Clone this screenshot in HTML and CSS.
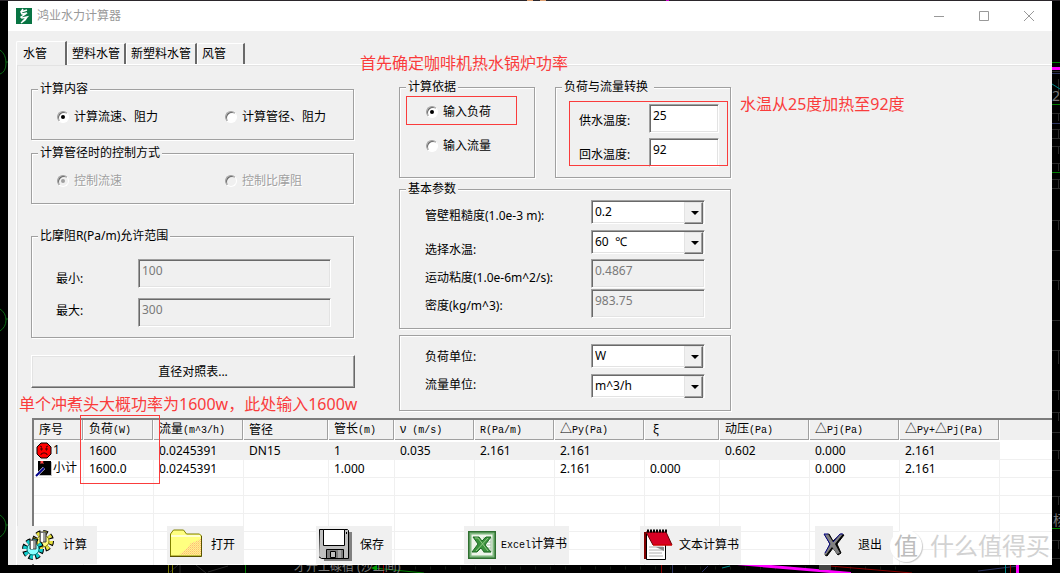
FILE: index.html
```html
<!DOCTYPE html>
<html lang="zh-CN">
<head>
<meta charset="utf-8">
<title>鸿业水力计算器</title>
<link rel="stylesheet" href="styles.css">
</head>
<body>
<svg class="backdrop" viewBox="0 0 1060 573" preserveAspectRatio="none" aria-hidden="true">
  <rect width="1060" height="573" fill="#000"/>
  <rect width="1060" height="1" fill="#2b262b"/>
  <g fill="#e0a070"><rect x="527" width="6" height="1"/><rect x="540" width="6" height="1"/></g>
  <rect x="666" width="3" height="1" fill="#c0c"/>
  <g fill="none" stroke="#084" stroke-width="1">
    <path stroke="#0a6a14" d="M0 50q6 4 6 13t-6 11M6 62h2M0 309q6 4 6 11t-6 11M6 319h2M0 515q6 4 6 11t-6 11M6 525h2"/>
    <path stroke="#008000" d="M1052 62.500h8M1052 104.500h8M1052 172.500h8M1052 528.500h8M245.500 565v8M374 568l50 5"/>
    <path stroke="#151c15" stroke-width="3" stroke-dasharray="1 14" d="M400 568h500"/>
    <path stroke="#2b2b2b" d="M1052 71.500h8M1058.500 79v17M1052 113.500h8M1058.500 113v8M1052 129.500h8M1058.500 129v9M1052 138.500h8M1052 146.500h8M1058.500 146v8M1052 163.500h8M1058.500 163v8M1052 179.500h8M1058.500 179v9M1052 188.500h8M1052 220.500h8M1058.500 220v10M1052 250.500h8M1052 280.500h8M1058.500 280v10M1052 320.500h8M1052 350.500h8M1058.500 350v14M1052 390.500h8M1058.500 390v10M1052 412.500h8M1058.500 412v9M1052 432.500h8M1052 450.500h8M1058.500 450v9M1052 470.500h8M1052 496.500h8M1058.500 496v9M1052 540.500h8M1058.500 540v9M1052 558.500h8M170 572l8-7M180 565v8M196 565l10 8M208 572l20-6"/>
    <path stroke="#2d3560" d="M1052 73.500h8M1052 123.500h8M978 571l40-5M672.500 565v8M702 572l6-6"/>
    <path stroke="#088" d="M1052 84l8 5M1005.500 565v8M722 568l8-2"/>
    <path stroke="#8a0000" d="M830 566l82 7M661.500 565v8M383.500 565v8M1010.500 565v8"/>
    <path stroke="#770" d="M168.500 565v8M172.500 565v8"/>
  </g>
  <rect x="1052" y="67" width="8" height="3" fill="#f0f"/>
  <path d="M737 565h34l80 7v1h-20z" fill="#f0f"/>
  <rect x="819" y="565" width="12" height="5" fill="#444"/>
  <rect x="1016" y="565" width="3" height="8" fill="#f0f"/>
  <path d="M371 568l6-3v6z" fill="#090"/>
  <g class="cad-text"><text x="1052" y="101">28</text><text x="1053" y="525">杨</text><text x="294" y="571" font-size="12">才开工碌宿 (沙工间)</text></g>
</svg>

<main class="window">
  <header class="titlebar">
    <svg class="app-icon" width="16" height="16" viewBox="0 0 16 16" aria-hidden="true"><rect width="16" height="16" fill="#087443"/><path d="M11 2L5 4l1 2 5-1-6 4 1 1 5-1-5 5M7 1L5 4M11 5l-6 4M11 9l-2 3-4 3" fill="none" stroke="#fff" stroke-width="1.500"/></svg>
    <h1 class="title">鸿业水力计算器</h1>
    <div class="caption-buttons">
      <button type="button" aria-label="最小化"><svg width="12" height="12" viewBox="0 0 12 12"><path d="M1 6.500h10"/></svg></button>
      <button type="button" aria-label="最大化"><svg width="12" height="12" viewBox="0 0 12 12"><path d="M1.500 1.500h9v9h-9z"/></svg></button>
      <button type="button" aria-label="关闭"><svg width="12" height="12" viewBox="0 0 12 12"><path d="M1 1l10 10M11 1L1 11"/></svg></button>
    </div>
  </header>

  <nav class="tabs" role="tablist">
    <button type="button" class="tab selected" role="tab" aria-selected="true">水管</button>
    <button type="button" class="tab" role="tab">塑料水管</button>
    <button type="button" class="tab" role="tab">新塑料水管</button>
    <button type="button" class="tab" role="tab">风管</button>
  </nav>

  <section class="pane">
    <form class="form">
      <div class="left-column">
        <fieldset class="group radios-row">
          <legend>计算内容</legend>
          <label><input type="radio" name="content" checked>计算流速、阻力</label>
          <label><input type="radio" name="content">计算管径、阻力</label>
        </fieldset>
        <fieldset class="group radios-row" disabled>
          <legend>计算管径时的控制方式</legend>
          <label><input type="radio" name="control" checked>控制流速</label>
          <label><input type="radio" name="control">控制比摩阻</label>
        </fieldset>
        <fieldset class="group range">
          <legend>比摩阻R(Pa/m)允许范围</legend>
          <div class="labels"><label for="rmin">最小:</label><label for="rmax">最大:</label></div>
          <div class="controls"><input id="rmin" type="text" value="100" disabled><input id="rmax" type="text" value="300" disabled></div>
        </fieldset>
        <button type="button" class="push">直径对照表...</button>
      </div>

      <div class="right-column">
        <div class="top-groups">
          <fieldset class="group basis">
            <legend>计算依据</legend>
            <label><input type="radio" name="basis" checked>输入负荷</label>
            <label><input type="radio" name="basis">输入流量</label>
          </fieldset>
          <fieldset class="group convert">
            <legend class="wide-legend">负荷与流量转换</legend>
            <div class="labels"><label for="supply">供水温度:</label><label for="return">回水温度:</label></div>
            <div class="controls"><input id="supply" type="text" value="25"><input id="return" type="text" value="92"></div>
          </fieldset>
        </div>
        <fieldset class="group params">
          <legend>基本参数</legend>
          <div class="labels"><label for="rough">管壁粗糙度(1.0e-3 m):</label><label for="temp">选择水温:</label><label for="visc">运动粘度(1.0e-6m^2/s):</label><label for="dens">密度(kg/m^3):</label></div>
          <div class="controls">
            <span class="combo"><select id="rough"><option>0.2</option></select></span>
            <span class="combo"><select id="temp"><option>60 &nbsp;℃</option></select></span>
            <input id="visc" type="text" value="0.4867" disabled>
            <input id="dens" type="text" value="983.75" disabled>
          </div>
        </fieldset>
        <fieldset class="group units">
          <div class="labels"><label for="loadunit">负荷单位:</label><label for="flowunit">流量单位:</label></div>
          <div class="controls">
            <span class="combo"><select id="loadunit"><option>W</option></select></span>
            <span class="combo"><select id="flowunit"><option>m^3/h</option></select></span>
          </div>
        </fieldset>
      </div>
    </form>

    <div class="results">
      <div class="list">
        <table>
          <colgroup><col class="w50"><col class="w70"><col class="w90"><col class="w85"><col class="w66"><col class="w80"><col class="w80"><col class="w90"><col class="w75"><col class="w90"><col class="w90"><col class="w100"><col></colgroup>
          <thead>
            <tr><th>序号</th><th>负荷<span class="mono">(W)</span></th><th>流量<span class="mono">(m^3/h)</span></th><th>管径</th><th>管长<span class="mono">(m)</span></th><th>ν<span class="mono"> (m/s)</span></th><th><span class="mono">R(Pa/m)</span></th><th>△<span class="mono">Py(Pa)</span></th><th>&nbsp;ξ</th><th>动压<span class="mono">(Pa)</span></th><th>△<span class="mono">Pj(Pa)</span></th><th>△<span class="mono">Py+</span>△<span class="mono">Pj(Pa)</span></th><th class="filler"></th></tr>
          </thead>
          <tbody>
            <tr class="active">
              <td class="index"><svg width="18" height="17" viewBox="0 0 18 17" aria-hidden="true"><path d="M6 1h6l4 4v7l-4 4H6l-4-4V5z" fill="#f00" stroke="#000"/><path d="M5 4l2 1M13 4l-2 1M6 6h1v2H6zM11 6h1v2h-1zM6 13v-1l2-1h2l2 1v1" fill="none" stroke="#400"/></svg>1</td>
              <td>1600</td><td>0.0245391</td><td>DN15</td><td>1</td><td>0.035</td><td>2.161</td><td>2.161</td><td></td><td>0.602</td><td>0.000</td><td>2.161</td><td class="filler"></td>
            </tr>
            <tr>
              <td class="index"><svg width="18" height="17" viewBox="0 0 18 17" aria-hidden="true"><rect x="3" y="2" width="14" height="14" fill="#c0c0c0"/><rect x="3" y="1" width="13" height="14" fill="#000"/><path d="M6 1v3M6 1.500h2v1H6M8 4V3" stroke="#f44" fill="none"/><path d="M9 8l-5 5-2 3" stroke="#fff" stroke-width="3"/><path d="M9 8l-5 5-3 3" stroke="#008" stroke-width="2"/></svg>小计</td>
              <td>1600.0</td><td>0.0245391</td><td></td><td>1.000</td><td></td><td></td><td>2.161</td><td>0.000</td><td></td><td>0.000</td><td>2.161</td><td class="filler"></td>
            </tr>
            <tr><td></td><td></td><td></td><td></td><td></td><td></td><td></td><td></td><td></td><td></td><td></td><td></td><td class="filler"></td></tr>
            <tr><td></td><td></td><td></td><td></td><td></td><td></td><td></td><td></td><td></td><td></td><td></td><td></td><td class="filler"></td></tr>
            <tr><td></td><td></td><td></td><td></td><td></td><td></td><td></td><td></td><td></td><td></td><td></td><td></td><td class="filler"></td></tr>
            <tr><td></td><td></td><td></td><td></td><td></td><td></td><td></td><td></td><td></td><td></td><td></td><td></td><td class="filler"></td></tr>
            <tr><td></td><td></td><td></td><td></td><td></td><td></td><td></td><td></td><td></td><td></td><td></td><td></td><td class="filler"></td></tr>
          </tbody>
        </table>
      </div>

      <div class="toolbar">
        <button type="button" class="tool first">
          <svg width="34" height="32" viewBox="0 0 34 32" aria-hidden="true">
            <g stroke="#000"><circle cx="21" cy="12" r="8" fill="none" stroke-width="6" stroke-dasharray="4 2.280"/><circle cx="21" cy="12" r="8" fill="none" stroke="#e6e03c" stroke-width="4" stroke-dasharray="3 3.280"/><circle cx="21" cy="12" r="6" fill="#fffb80" stroke="#8a8400"/></g>
            <path d="M18 3h6v10h-6z" fill="#a0a0a0" stroke="#444"/><path d="M20 4v9" stroke="#fff" stroke-width="2"/>
            <g stroke="#000"><circle cx="11" cy="20" r="8" fill="none" stroke-width="6" stroke-dasharray="4 2.280"/><circle cx="11" cy="20" r="8" fill="none" stroke="#1cc" stroke-width="4" stroke-dasharray="3 3.280"/><circle cx="11" cy="20" r="6" fill="#8ff" stroke="#077"/></g>
            <path d="M8 11h6v9H8z" fill="#a0a0a0" stroke="#444"/><path d="M10 12v8" stroke="#fff" stroke-width="2"/>
          </svg><span>计算</span>
        </button>
        <button type="button" class="tool">
          <svg width="34" height="32" viewBox="0 0 34 32" aria-hidden="true">
            <defs><pattern id="dither" width="2" height="2" patternUnits="userSpaceOnUse"><rect width="1" height="1" fill="#ffb080"/><rect x="1" y="1" width="1" height="1" fill="#ffc890"/></pattern></defs>
            <path d="M.500 27V5l3-4h10l3 4h13l2 2v20z" fill="#ffff80" stroke="#808000"/><path d="M1 7h29" stroke="#ffffd0" stroke-width="2"/><path d="M31 9v17H9l8-7 4-5 6-2z" fill="url(#dither)"/><path d="M0 27.500h31.500V7" fill="none" stroke="#5a5200"/>
          </svg><span>打开</span>
        </button>
        <button type="button" class="tool">
          <svg width="34" height="34" viewBox="0 0 34 34" aria-hidden="true">
            <path d="M3 4h30v29H5z" fill="#808080"/><path d="M.500 1.500h28l1 1v28h-27l-3-2z" fill="#c0c0c0" stroke="#000"/><path d="M4.500 1.500h21v16h-21z" fill="#fff" stroke="#000"/><path d="M7.500 21.500h17v9h-17z" fill="#808080" stroke="#000"/><path d="M11.500 23.500h5v6h-5z" fill="#c0c0c0" stroke="#000"/><path d="M19 22h3v8h-3z" fill="#aaa"/><path d="M27 4h1v2h-1z"/>
          </svg><span>保存</span>
        </button>
        <button type="button" class="tool wide">
          <svg width="28" height="28" viewBox="0 0 28 28" aria-hidden="true">
            <rect x="1" y="1" width="26" height="26" fill="#eef5ea" stroke="#2f7030" stroke-width="2"/><rect x="2.500" y="2.500" width="23" height="23" fill="none" stroke="#7fb87f" stroke-width="2"/><path d="M15 7h8v14h-8" fill="#fff" stroke="#9cbd9c"/><path d="M16 11h7M16 14h7M16 17h7" stroke="#a8c8a8"/><path d="M5 6h6l3 4 4-4h5l-6 8 6 7h-7l-3-4-4 4H4l6-8z" fill="#3b923d" stroke="#1e6a25"/><path d="M7 7h3l10 13M8 20L20 7" fill="none" stroke="#90c985"/>
          </svg><span><span class="mono">Excel</span>计算书</span>
        </button>
        <button type="button" class="tool wide">
          <svg width="30" height="32" viewBox="0 0 30 32" aria-hidden="true">
            <path d="M0 3h2v27H0z" fill="#800000"/><path d="M2.500 4.500h19v26h-19z" fill="#fff" stroke="#000"/><path d="M5 18h14M5 21h15M5 24h13M5 27h14" stroke="#b0b0b0"/><path d="M12 18h8v4z" fill="#888"/><path d="M2 3h20l6 13H9z" fill="#d80024" stroke="#600"/><path d="M9 16h19" stroke="#f00"/><path d="M3 2h21" stroke="#000" stroke-width="3" stroke-dasharray="2 1"/>
          </svg><span>文本计算书</span>
        </button>
        <button type="button" class="tool exit">
          <svg width="24" height="26" viewBox="0 0 24 26" aria-hidden="true">
            <path d="M3 3l4-1 4 7 8-7 3 1-7 9 4 9-3 2-5-7-6 8-2-1 5-11z" fill="#000" stroke="#000"/><path d="M2 2h4l5 8 7-8 3 0-8 10 5 9-3 1-5-7-6 8-2-1 6-10z" fill="#808080"/><path d="M6 2H2l6 10-5 9M11 10l7-8h3" fill="none" stroke="#000080"/>
          </svg><span>退出</span>
        </button>
      </div>
    </div>
  </section>

  <div class="mark mark-basis"></div>
  <div class="mark mark-temps"></div>
  <div class="mark mark-load"></div>
  <p class="note note-power">首先确定咖啡机热水锅炉功率</p>
  <p class="note note-temp">水温从25度加热至92度</p>
  <p class="note note-load">单个冲煮头大概功率为1600w，此处输入1600w</p>
  <div class="watermark"><span class="seal">值</span><span>什么值得买</span></div>
</main>
</body>
</html>
```
FILE: styles.css
```css
* {
  box-sizing: border-box;
}

body {
  margin: 0;
  height: 100vh;
  padding: 1px 8px 8px;
  background: #000;
  overflow: hidden;
  color: #000;
  font: 12px/16px "Noto Sans", "Noto Sans CJK SC", sans-serif;
}

button,
input,
select {
  font: inherit;
  color: inherit;
  margin: 0;
}

.backdrop {
  position: absolute;
  inset: 0;
  width: 100%;
  height: 100%;
}

.cad-text {
  fill: #777;
  font-size: 14px;
}

.window {
  position: relative;
  display: flex;
  flex-direction: column;
  height: 100%;
  background: #f0f0f0;
}

.titlebar {
  display: flex;
  align-items: center;
  height: 30px;
  flex: none;
  padding: 0 1px 0 8px;
  background: #fff;
}

.title {
  margin: 0 auto 0 5px;
  font-size: 12px;
  font-weight: 400;
  color: #999;
}

.caption-buttons {
  display: flex;
}

.caption-buttons button {
  display: grid;
  place-items: center;
  width: 45px;
  height: 28px;
  padding: 0;
  border: 0;
  background: none;
}

.caption-buttons path {
  fill: none;
  stroke: #999;
}

.tabs {
  display: flex;
  align-items: flex-end;
  flex: none;
  height: 33px;
  padding-left: 8px;
}

.tab {
  min-width: 48px;
  height: 21px;
  padding: 0 5px 0 4px;
  border: 1px solid #fff;
  border-right: 2px solid #696969;
  border-bottom: 0;
  border-radius: 2px 0 0 0;
  background: #f0f0f0;
  text-align: left;
  line-height: 18px;
}

.tab:not(.selected) {
  padding-right: 4px;
}

.tab.selected {
  width: 51px;
  height: 24px;
  margin-bottom: -1px;
  padding-left: 6px;
  z-index: 1;
}

.pane {
  display: flex;
  flex-direction: column;
  flex: 1;
  min-height: 0;
  margin-left: 8px;
  border-top: 1px solid #fff;
  border-left: 1px solid #fff;
  box-shadow: inset 1px 1px 0 #e3e3e3;
}

.form {
  display: flex;
  flex: none;
  gap: 44px;
  padding: 14px 14px 7px;
}

.left-column {
  display: flex;
  flex-direction: column;
  width: 324px;
  padding-top: 2px;
}

.left-column .group {
  margin-right: 1px;
}

.right-column {
  width: 332px;
}

.group {
  min-width: 0;
  margin: 0;
  border: 1px solid #a0a0a0;
  box-shadow: 1px 1px 0 #fff, inset 1px 1px 0 #fff;
}

.group legend {
  height: 16px;
  padding: 0 2px;
  background: #f0f0f0;
}

.group .wide-legend {
  padding-right: 6px;
}

.group label {
  white-space: nowrap;
}

.labels,
.controls {
  display: grid;
  align-content: start;
}

.radios-row {
  display: grid;
  grid-template-columns: 168px 1fr;
  margin-bottom: 5px;
  padding: 12px 0 14px 25px;
}

.radios-row legend {
  margin-left: -19px;
}

.basis legend {
  margin-left: -20px;
}

.radios-row label,
.basis label {
  display: flex;
  align-items: center;
  gap: 5px;
}

.group:disabled label {
  color: #a0a0a0;
  text-shadow: 1px 1px 0 #fff;
}

.group input[type="radio"] {
  appearance: none;
  display: grid;
  place-items: center;
  width: 12px;
  height: 12px;
  border: 1px solid;
  border-color: #a0a0a0 #fff #fff #a0a0a0;
  border-radius: 50%;
  background: #fff;
  box-shadow: inset 1px 1px 0 #696969;
}

.group input[type="radio"]:checked::before {
  content: "";
  width: 4px;
  height: 4px;
  border-radius: 50%;
  background: #000;
}

.group input[type="radio"]:disabled {
  background: #f0f0f0;
}

.group input[type="radio"]:disabled::before {
  background: #a0a0a0;
}

.range {
  display: grid;
  grid-template-columns: 82px 193px;
  margin-top: 19px;
  padding: 15px 0 10px 24px;
}

.range legend {
  margin-left: -18px;
}

.range .labels {
  grid-template-rows: 28px 32px;
  align-items: end;
}

.range .controls {
  row-gap: 10px;
}

input[type="text"] {
  width: 100%;
  height: 29px;
  padding: 0 3px 6px;
  border: 1px solid;
  border-color: #a0a0a0 #fff #fff #a0a0a0;
  border-radius: 0;
  background: #fff;
  box-shadow: inset 1px 1px 0 #696969, inset -1px -1px 0 #e3e3e3;
}

input[type="text"]:disabled {
  background: #f0f0f0;
  color: #7a7a7a;
}

.push {
  height: 33px;
  margin-top: 17px;
  border: 1px solid;
  border-color: #fff #696969 #696969 #fff;
  background: #f0f0f0;
  box-shadow: inset -1px -1px 0 #a0a0a0, inset 1px 1px 0 #e3e3e3;
}

.top-groups {
  display: grid;
  grid-template-columns: 136px 176px;
  gap: 20px;
}

.basis {
  display: flex;
  flex-direction: column;
  gap: 18px;
  padding: 9px 0 19px 26px;
}

.convert {
  display: grid;
  grid-template-columns: 70px 70px;
  padding: 9px 0 5px 23px;
}

.convert legend {
  margin-left: -17px;
}

.convert .labels {
  grid-template-rows: 34px 34px;
  align-items: center;
}

.convert .controls {
  row-gap: 5px;
}

.params,
.units {
  display: grid;
  grid-template-columns: 166px 114px;
  margin-top: 3px;
  padding: 3px 0 10px 25px;
}

.params legend {
  margin-left: -19px;
}

.params .labels {
  grid-template-rows: 24px 34px 28px 28px;
  align-items: end;
}

.params .controls {
  grid-template-rows: 30px 29px 30px 29px;
}

.units {
  margin-top: 6px;
  padding: 8px 0 10px 25px;
}

.units .labels {
  grid-template-rows: 26px 30px;
  align-items: center;
}

.units .controls {
  grid-template-rows: 30px 24px;
}

.combo {
  position: relative;
  height: 24px;
}

.combo select {
  appearance: none;
  display: block;
  width: 100%;
  height: 24px;
  padding: 0 20px 0 3px;
  border: 1px solid;
  border-color: #a0a0a0 #fff #fff #a0a0a0;
  border-radius: 0;
  background: #fff;
  box-shadow: inset 1px 1px 0 #696969, inset -1px -1px 0 #e3e3e3;
}

.combo::before {
  content: "";
  position: absolute;
  top: 2px;
  right: 2px;
  width: 17px;
  height: 20px;
  border: 1px solid;
  border-color: #e3e3e3 #696969 #696969 #e3e3e3;
  background: #f0f0f0;
  box-shadow: inset -1px -1px 0 #a0a0a0;
  pointer-events: none;
}

.combo::after {
  content: "";
  position: absolute;
  top: 11px;
  right: 6px;
  border: solid transparent;
  border-width: 4px 4px 0;
  border-top-color: #000;
  pointer-events: none;
}

.results {
  display: grid;
  grid-template: minmax(0, 1fr) / minmax(0, 1fr);
  flex: 1;
  min-height: 0;
}

.list,
.toolbar {
  grid-area: 1 / 1;
}

.list {
  margin-left: 15px;
  border-top: 2px solid #7c7c7c;
  border-left: 2px solid #7c7c7c;
  background: #fff;
  overflow: hidden;
}

.list table {
  width: 100%;
  table-layout: fixed;
  border-spacing: 0;
}

.w50 { width: 50px; }
.w66 { width: 66px; }
.w70 { width: 70px; }
.w75 { width: 75px; }
.w80 { width: 80px; }
.w85 { width: 85px; }
.w90 { width: 90px; }
.w100 { width: 100px; }

.list th {
  height: 22px;
  padding: 0 0 0 5px;
  border-right: 1px solid #fff;
  border-bottom: 2px solid #fff;
  background: #f0f0f0;
  box-shadow: inset -1px -1px 0 #a0a0a0;
  font-weight: 400;
  text-align: left;
  white-space: nowrap;
}

.list .filler {
  border-right: 0;
  box-shadow: none;
}

.list td {
  height: 18px;
  padding: 0 0 0 5px;
  border-right: 1px solid #f0f0f0;
  border-bottom: 1px solid #f0f0f0;
  white-space: nowrap;
}

.list .active td:not(.filler) {
  background: #f0f0f0;
}

.list .index {
  padding-left: 1px;
}

.index svg {
  display: block;
  float: left;
}

.mono {
  font-family: "Liberation Mono", monospace;
  font-size: 10px;
  white-space: pre;
}

.toolbar {
  display: grid;
  grid-template-columns: 150px 149px 148px 176px 175px 1fr;
  align-self: end;
  justify-items: start;
  padding-bottom: 1px;
}

.tool {
  display: flex;
  align-items: center;
  height: 38px;
  padding: 0 8px 0 3px;
  border: 0;
  background: #f0f0f0;
  white-space: nowrap;
}

.tool svg {
  flex: none;
  margin-right: 7px;
}

.tool.first {
  padding-left: 5px;
  padding-right: 10px;
}

.tool.wide {
  padding: 0 2px 0 4px;
}

.tool.wide svg {
  margin-right: 5px;
}

.tool.exit {
  padding-left: 7px;
  padding-right: 11px;
}

.tool.exit svg {
  margin-right: 12px;
}

.mark {
  position: absolute;
  border: 1px solid #fa3c3c;
  pointer-events: none;
}

.mark-basis {
  left: 398px;
  top: 95px;
  width: 111px;
  height: 29px;
}

.mark-temps {
  left: 561px;
  top: 100px;
  width: 159px;
  height: 65px;
}

.mark-load {
  left: 72px;
  top: 414px;
  width: 80px;
  height: 69px;
}

.note {
  position: absolute;
  margin: 0;
  color: #fa3c3c;
  font-size: 16px;
  line-height: 20px;
  white-space: nowrap;
}

.note-power {
  left: 352px;
  top: 52px;
}

.note-temp {
  left: 732px;
  top: 93px;
}

.note-load {
  left: 11px;
  top: 393px;
}

.watermark {
  position: absolute;
  right: 2px;
  bottom: 3px;
  display: flex;
  align-items: center;
  gap: 8px;
  color: #d2d2d2;
  font-size: 24px;
  line-height: 32px;
  text-shadow: -1px -1px 0 #fff;
}

.seal {
  width: 32px;
  height: 32px;
  border-radius: 50%;
  background: #fff;
  box-shadow: 1px 1px 1px #ccc;
  color: #bdbdbd;
  text-align: center;
}
```
